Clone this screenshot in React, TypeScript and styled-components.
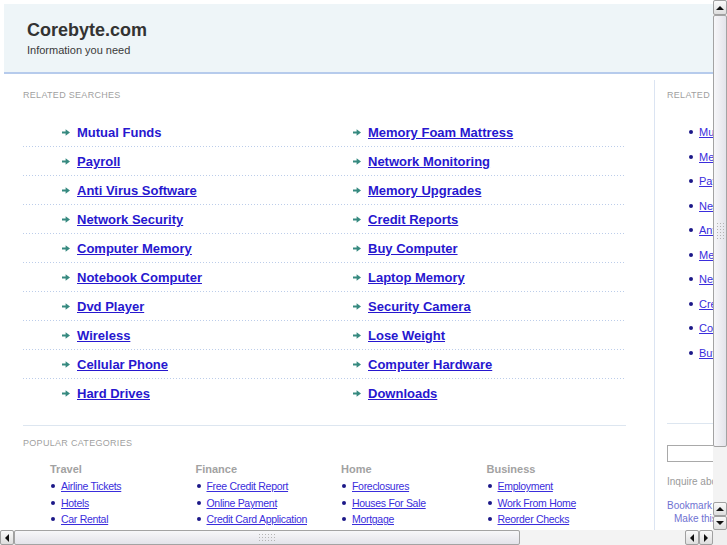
import React from "react";
import styled, { createGlobalStyle } from "styled-components";

const Global = createGlobalStyle`
  html, body { margin: 0; padding: 0; overflow: hidden; background: #fff; }
  body { font-family: "Liberation Sans", Arial, sans-serif; }
  * { box-sizing: border-box; }
`;

const Frame = styled.div`
  width: 727px;
  height: 545px;
  display: grid;
  grid-template-columns: 713px 14px;
  grid-template-rows: 530px 15px;
  background: #fff;
`;

const Viewport = styled.div`
  overflow: hidden;
  background: #fff;
`;

const Page = styled.div`
  width: 900px;
  padding: 4px 0 0 4px;
`;

const Header = styled.header`
  height: 70px;
  padding: 15px 0 0 23px;
  background: #eef5f8;
  border-bottom: 2px solid #b6cbec;
`;

const Title = styled.h1`
  margin: 0;
  font-size: 18px;
  line-height: 23px;
  font-weight: bold;
  color: #333;
`;

const Tagline = styled.div`
  margin-top: 2px;
  font-size: 11px;
  line-height: 13px;
  color: #3a3a3a;
`;

const Body = styled.div`
  display: flex;
  margin-top: 6px;
`;

const Main = styled.main`
  width: 651px;
  flex: 0 0 651px;
  padding: 9px 28px 0 19px;
  border-right: 1px solid #dbe4f2;
  min-height: 470px;
`;

const SectionLabel = styled.div`
  font-size: 9px;
  line-height: 12px;
  letter-spacing: 0.3px;
  color: #9f9f9f;
  text-transform: uppercase;
  white-space: nowrap;
`;

const SearchList = styled.div`
  margin-top: 17px;
`;

const Row = styled.div<{ $last?: boolean }>`
  display: grid;
  grid-template-columns: 291px 1fr;
  align-items: center;
  height: 29px;
  padding-left: 39px;
  background-image: ${(p) =>
    p.$last ? "none" : "linear-gradient(to right, #bccdea 50%, transparent 50%)"};
  background-size: 3px 1px;
  background-repeat: repeat-x;
  background-position: left bottom;
`;

const Item = styled.div`
  display: flex;
  align-items: center;
  gap: 7px;
`;

const MainLink = styled.a<{ $plain?: boolean }>`
  font-size: 13px;
  font-weight: bold;
  color: #2717cf;
  text-decoration: ${(p) => (p.$plain ? "none" : "underline")};
  white-space: nowrap;
  cursor: pointer;
`;

const Popular = styled.section`
  margin-top: 17px;
  border-top: 1px solid #dde6f0;
  padding-top: 11px;
`;

const CatGrid = styled.div`
  display: grid;
  grid-template-columns: repeat(4, 145.5px);
  padding-left: 27px;
  margin-top: 13px;
`;

const CatTitle = styled.div`
  font-size: 11px;
  line-height: 14px;
  font-weight: bold;
  color: #a2a2a2;
`;

const CatList = styled.ul`
  list-style: none;
  margin: 2px 0 0;
  padding: 0;
`;

const CatItem = styled.li`
  display: flex;
  align-items: center;
  gap: 6px;
  height: 16.5px;
`;

const Dot = styled.span<{ $indent?: number }>`
  width: 4px;
  height: 4px;
  border-radius: 50%;
  background: #1c1888;
  flex: 0 0 4px;
  margin-left: ${(p) => p.$indent ?? 1}px;
`;

const SmallLink = styled.a`
  font-size: 10.5px;
  letter-spacing: -0.3px;
  color: #3a2ddc;
  text-decoration: underline;
  white-space: nowrap;
  cursor: pointer;
`;

const Sidebar = styled.aside`
  width: 220px;
  padding: 9px 0 0 12px;
`;

const SideList = styled.ul`
  list-style: none;
  margin: 19px 0 0;
  padding: 0 0 0 22px;
`;

const SideItem = styled.li`
  display: flex;
  align-items: center;
  gap: 6px;
  height: 24.5px;
`;

const SideLink = styled.a`
  font-size: 11px;
  color: #3a2ddc;
  text-decoration: underline;
  white-space: nowrap;
  cursor: pointer;
`;

const SideRule = styled.div`
  margin-top: 58px;
  border-top: 1px solid #dde6f0;
`;

const SearchBox = styled.input`
  display: block;
  margin-top: 21px;
  width: 160px;
  height: 17px;
  border: 1px solid #a9a9a9;
  background: #fff;
  padding: 0 3px;
  font-family: inherit;
  font-size: 11px;
`;

const Inquire = styled.div`
  margin-top: 14px;
  font-size: 10px;
  line-height: 12px;
  color: #9a9a9a;
  white-space: nowrap;
`;

const Bookmark = styled.div<{ $indent?: number; $gap?: number }>`
  font-size: 10px;
  line-height: 13px;
  color: #6f72d2;
  white-space: nowrap;
  padding-left: ${(p) => p.$indent ?? 0}px;
  margin-top: ${(p) => p.$gap ?? 0}px;
`;

/* ---------- scrollbars ---------- */

const VBar = styled.div`
  display: flex;
  flex-direction: column;
  background: #efefef;
`;

const HBar = styled.div`
  display: flex;
  background: #efefef;
`;

const Track = styled.div`
  flex: 1;
  background-color: #f3f3f3;
  background-image: radial-gradient(#d3d3d3 0.6px, transparent 0.7px);
  background-size: 2px 2px;
`;

const Thumb = styled.div<{ $vertical?: boolean; $size: number }>`
  flex: 0 0 ${(p) => p.$size}px;
  display: flex;
  align-items: center;
  justify-content: center;
  border: 1px solid #a3a3a3;
  border-radius: 2px;
  background: ${(p) =>
    p.$vertical
      ? "linear-gradient(to right, #f7f7f9, #e3e3ea)"
      : "linear-gradient(to bottom, #f7f7f9, #e3e3ea)"};
`;

const Grip = styled.div<{ $vertical?: boolean }>`
  width: ${(p) => (p.$vertical ? "9px" : "18px")};
  height: ${(p) => (p.$vertical ? "18px" : "9px")};
  background-image: radial-gradient(#b4b4b4 0.8px, transparent 0.9px);
  background-size: 3px 3px;
`;

const ArrowButton = styled.div<{ $w: number; $h: number }>`
  flex: 0 0 auto;
  width: ${(p) => p.$w}px;
  height: ${(p) => p.$h}px;
  display: flex;
  align-items: center;
  justify-content: center;
  border: 1px solid #a0a0a0;
  border-radius: 2px;
  background: linear-gradient(to bottom, #fafafa, #dedede);
`;

const Corner = styled.div`
  background: #efefef;
`;

const Tri = ({ dir }: { dir: "up" | "down" | "left" | "right" }) => {
  const pts =
    dir === "up"
      ? "0,5 4,1 8,5"
      : dir === "down"
      ? "0,1 4,5 8,1"
      : dir === "left"
      ? "5,0 1,4 5,8"
      : "1,0 5,4 1,8";
  const vert = dir === "up" || dir === "down";
  return (
    <svg width={vert ? 8 : 6} height={vert ? 6 : 8} viewBox={vert ? "0 0 8 6" : "0 0 6 8"}>
      <polygon points={pts} fill="#111" />
    </svg>
  );
};

const ArrowIcon = () => (
  <svg width="8" height="7" viewBox="0 0 8 7" style={{ flex: "0 0 8px" }}>
    <path d="M0 2.6h3.6V0.2L8 3.5 3.6 6.8V4.4H0z" fill="#378a80" />
  </svg>
);

const searches: [string, string][] = [
  ["Mutual Funds", "Memory Foam Mattress"],
  ["Payroll", "Network Monitoring"],
  ["Anti Virus Software", "Memory Upgrades"],
  ["Network Security", "Credit Reports"],
  ["Computer Memory", "Buy Computer"],
  ["Notebook Computer", "Laptop Memory"],
  ["Dvd Player", "Security Camera"],
  ["Wireless", "Lose Weight"],
  ["Cellular Phone", "Computer Hardware"],
  ["Hard Drives", "Downloads"],
];

const categories: { title: string; links: string[] }[] = [
  { title: "Travel", links: ["Airline Tickets", "Hotels", "Car Rental"] },
  { title: "Finance", links: ["Free Credit Report", "Online Payment", "Credit Card Application"] },
  { title: "Home", links: ["Foreclosures", "Houses For Sale", "Mortgage"] },
  { title: "Business", links: ["Employment", "Work From Home", "Reorder Checks"] },
];

const sideLinks = [
  "Mutual Funds",
  "Memory Foam Mattress",
  "Payroll",
  "Network Monitoring",
  "Anti Virus Software",
  "Memory Upgrades",
  "Network Security",
  "Credit Reports",
  "Computer Memory",
  "Buy Computer",
];

export default function App() {
  return (
    <>
      <Global />
      <Frame>
        <Viewport>
          <Page>
            <Header>
              <Title>Corebyte.com</Title>
              <Tagline>Information you need</Tagline>
            </Header>
            <Body>
              <Main>
                <SectionLabel>Related Searches</SectionLabel>
                <SearchList>
                  {searches.map(([a, b], i) => (
                    <Row key={a} $last={i === searches.length - 1}>
                      <Item>
                        <ArrowIcon />
                        <MainLink $plain={i === 0}>{a}</MainLink>
                      </Item>
                      <Item>
                        <ArrowIcon />
                        <MainLink>{b}</MainLink>
                      </Item>
                    </Row>
                  ))}
                </SearchList>
                <Popular>
                  <SectionLabel>Popular Categories</SectionLabel>
                  <CatGrid>
                    {categories.map((c) => (
                      <div key={c.title}>
                        <CatTitle>{c.title}</CatTitle>
                        <CatList>
                          {c.links.map((l) => (
                            <CatItem key={l}>
                              <Dot />
                              <SmallLink>{l}</SmallLink>
                            </CatItem>
                          ))}
                        </CatList>
                      </div>
                    ))}
                  </CatGrid>
                </Popular>
              </Main>
              <Sidebar>
                <SectionLabel>Related Searches</SectionLabel>
                <SideList>
                  {sideLinks.map((l) => (
                    <SideItem key={l}>
                      <Dot $indent={0} />
                      <SideLink>{l}</SideLink>
                    </SideItem>
                  ))}
                </SideList>
                <SideRule />
                <SearchBox type="text" aria-label="search" />
                <Inquire>Inquire about this domain</Inquire>
                <Bookmark $gap={11}>Bookmark this page</Bookmark>
                <Bookmark $indent={7}>Make this your homepage</Bookmark>
              </Sidebar>
            </Body>
          </Page>
        </Viewport>
        <VBar>
          <ArrowButton $w={14} $h={15}>
            <Tri dir="up" />
          </ArrowButton>
          <Thumb $vertical $size={432}>
            <Grip $vertical />
          </Thumb>
          <Track />
          <ArrowButton $w={14} $h={14}>
            <Tri dir="up" />
          </ArrowButton>
          <ArrowButton $w={14} $h={14}>
            <Tri dir="down" />
          </ArrowButton>
        </VBar>
        <HBar>
          <ArrowButton $w={14} $h={15}>
            <Tri dir="left" />
          </ArrowButton>
          <Thumb $size={506}>
            <Grip />
          </Thumb>
          <Track />
          <ArrowButton $w={14} $h={15}>
            <Tri dir="left" />
          </ArrowButton>
          <ArrowButton $w={14} $h={15}>
            <Tri dir="right" />
          </ArrowButton>
        </HBar>
        <Corner />
      </Frame>
    </>
  );
}
